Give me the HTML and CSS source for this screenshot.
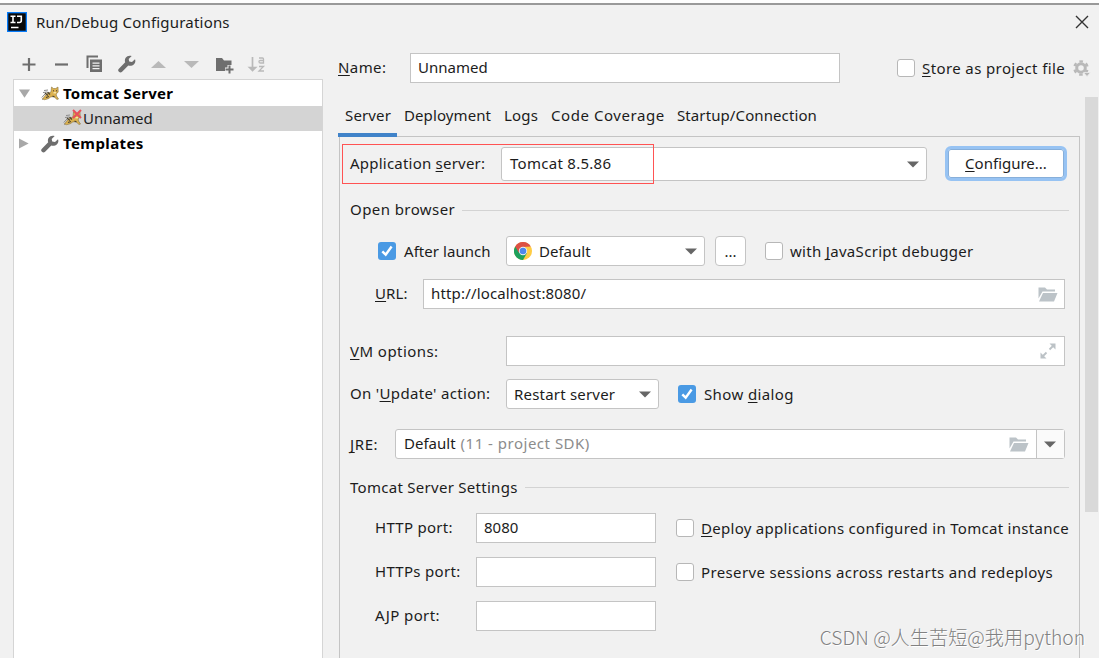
FILE: index.html
```html
<!DOCTYPE html>
<html lang="en">
<head>
<meta charset="utf-8">
<title>Run/Debug Configurations</title>
<link rel="stylesheet" href="styles.css">
</head>
<body>
<svg class="defs" width="0" height="0">
  <symbol id="caret" viewBox="0 0 12 7"><path d="M0 0.5h12L6 6.5z"/></symbol>
  <symbol id="wrench" viewBox="0 0 18 18"><path d="M17 4.200 14 7.100 11.200 6.600 10.700 4 13.700 1C11.400.2 9 .8 7.700 2.700 6.800 4.100 6.600 5.800 7.200 7.300L.9 13.700a2.100 2.100 0 0 0 3.200 3.100L10.300 10.500c2 .6 4.200.1 5.700-1.300 1.300-1.300 1.700-3.300 1-5z"/></symbol>
  <symbol id="folder" viewBox="0 0 20 15"><path d="M.5.500h6.500l2 2h8v2H4.500L.5 11.500z"/><path d="M5 6h14.500l-3.500 8.500H1z"/></symbol>
  <symbol id="check" viewBox="0 0 18 18"><path d="M4.300 9.300 7.700 12.700 13.600 4.500" fill="none" stroke="#fff" stroke-width="2.400"/></symbol>
  <symbol id="cat" viewBox="0 0 18 16">
    <path d="M3 4.500 7 4M2 6.500 6 6M.8 11.500 4 8M1 13.500l3-2" fill="none" stroke="#8a8a8a" stroke-width="1"/>
    <path d="M3.500 10.500 6 7.500l4-1.500L10.500 1l2 1.500h2.200l2.300-1.500.2 5-2 2 .3 2 2 3-1.500.5-3-2.800-3.200.2-2.500 1.800-3.800 1-2-.7z" fill="#dcb24f" stroke="#8a7441" stroke-width=".6"/>
    <path d="m4 7 3 2.500M6.500 6l2.500 2.500M5 11.500l3-1M11.500 10l2 1" stroke="#4a4331" stroke-width="1.200"/>
    <path d="M12 4.800h1M15 4.800h1" stroke="#433" stroke-width="1"/><path d="M12.500 6.800h2.500" stroke="#fff5ce"/>
  </symbol>
</svg>
<div class="window">
  <header class="titlebar">
    <svg class="logo" viewBox="0 0 20 20"><rect width="20" height="20" fill="#087cfa"/><rect x="1.300" y="1.300" width="17.400" height="17.400" fill="#090909"/><path d="M3.500 4.300h5M6 4.300v6.200M3.500 10.500h5M10 4.300h4.300v4.200q0 2-2 2h-2.300" fill="none" stroke="#fff" stroke-width="1.600"/><path d="M4 15.500h7.500" stroke="#fff" stroke-width="1.500"/></svg>
    <span class="t title">Run/Debug Configurations</span>
    <svg class="close" viewBox="0 0 14 14"><path d="m1 1 12 12M13 1 1 13" stroke="#333" stroke-width="1.400"/></svg>
  </header>
  <main class="body">
    <aside class="side">
      <div class="toolbar">
        <svg viewBox="0 0 20 20"><path d="M10 4v13M3.500 10.500h13" stroke="#6e6e6e" stroke-width="2.200"/></svg>
        <svg viewBox="0 0 20 20"><path d="M3 10.500h13" stroke="#6e6e6e" stroke-width="2.200"/></svg>
        <svg viewBox="0 0 20 20"><path d="M3.500 14V2.500H14" fill="none" stroke="#6e6e6e" stroke-width="2"/><path d="M6 5.500h12V18H6zM8.500 8.500v1.200h7V8.500zM8.500 11.200v1.200h7v-1.200zM8.500 14v1.200h7V14z" fill="#6e6e6e" fill-rule="evenodd"/></svg>
        <svg viewBox="0 0 18 18" fill="#6e6e6e"><use href="#wrench"/></svg>
        <svg viewBox="0 0 20 20"><path d="M2 14h15L9.500 7z" fill="#b9b9b9"/></svg>
        <svg viewBox="0 0 20 20"><path d="M2 7h15L9.500 14z" fill="#b9b9b9"/></svg>
        <svg viewBox="0 0 20 20"><path d="M2 4h6l2 2.500h7.500V11h-4v2.500H11V17H2z" fill="#6e6e6e"/><path d="M15.500 11.500v8M11.500 15.500h8" stroke="#6e6e6e" stroke-width="2"/></svg>
        <svg viewBox="0 0 20 20"><path d="M5.500 3v13M2.500 13.500l3 3 3-3z" fill="#b9b9b9" stroke="#b9b9b9" stroke-width="1.700"/><path d="M12 4h3.500q1 0 1 1v4h-3q-1.500 0-1.500-1.300t1.500-1.200h3M12 12.500h4.500l-4.500 4.500h5" fill="none" stroke="#b9b9b9" stroke-width="1.300"/></svg>
      </div>
      <div class="tree">
        <div class="node"><svg class="arrow" viewBox="0 0 12 12"><path d="M0 1.500h12L6 10.500z"/></svg><svg class="cat"><use href="#cat"/></svg><b class="t up w-tomcat">Tomcat Server</b></div>
        <div class="node child selected"><span class="badged"><svg class="cat"><use href="#cat"/></svg><svg class="cross" viewBox="0 0 10 10"><path d="m1 1 8 8M9 1 1 9" stroke="#e8505b" stroke-width="2"/></svg></span><span class="t up">Unnamed</span></div>
        <div class="node"><svg class="arrow" viewBox="0 0 12 12"><path d="M0 0.500v11L10.500 6z"/></svg><svg class="tool"><use href="#wrench"/></svg><b class="t up w-templates">Templates</b></div>
      </div>
    </aside>
    <section class="config">
      <div class="name-row">
        <label class="t up name-label"><u>N</u>ame:</label>
        <div class="field name-field"><span class="t up">Unnamed</span></div>
        <i class="checkbox"></i><span class="t store"><u>S</u>tore as project file</span>
        <svg class="gear" viewBox="0 0 18 18"><circle cx="8" cy="9" r="4.300" fill="none" stroke="#b9b9b9" stroke-width="3"/><circle cx="8" cy="9" r="6.600" fill="none" stroke="#b9b9b9" stroke-width="2.400" stroke-dasharray="3.450 3.450" stroke-dashoffset="1.700" transform="rotate(30 8 9)"/><path d="M10.500 13.500h7L14 17.500z" fill="#b9b9b9" stroke="#f1f1f1" stroke-width=".7"/></svg>
      </div>
      <nav class="tabs">
        <span class="tab active"><span class="t w-server">Server</span></span>
        <span class="tab tab-deploy"><span class="t">Deployment</span></span>
        <span class="tab tab-logs"><span class="t">Logs</span></span>
        <span class="tab tab-cover"><span class="t">Code Coverage</span></span>
        <span class="tab tab-start"><span class="t">Startup/Connection</span></span>
      </nav>
      <div class="pane">
        <div class="row app-row">
          <label class="t up app-label">Application <u>s</u>erver:</label>
          <div class="field combo app-combo"><span class="t up w-version">Tomcat 8.5.86</span><svg class="caret"><use href="#caret"/></svg></div>
          <div class="configure"><span class="t"><u>C</u>onfigure...</span></div>
          <div class="highlight"></div>
        </div>
        <div class="group browser-group"><span class="t up w-open">Open browser</span><hr></div>
        <div class="row launch-row">
          <i class="checkbox on"><svg><use href="#check"/></svg></i><span class="t launch-label">After launch</span>
          <div class="field combo browser-combo">
            <svg class="chrome" viewBox="0 0 18 18"><circle cx="9" cy="9" r="9" fill="#fc4"/><path d="M9 9 1.200 4.500A9 9 0 0 0 9 18l3.900-6.800z" fill="#1da05d"/><path d="M1.200 4.500A9 9 0 0 1 16.800 4.500L9 5v4l-3.900 2z" fill="#dd5145"/><circle cx="9" cy="9" r="4.200" fill="#f1f1f1"/><circle cx="9" cy="9" r="3.300" fill="#4d87ed"/></svg>
            <span class="t">Default</span><svg class="caret"><use href="#caret"/></svg></div>
          <div class="more"><span class="t">...</span></div>
          <i class="checkbox"></i><span class="t debug-label">with <u>J</u>avaScript debugger</span>
        </div>
        <div class="row url-row"><label class="t up url-label"><u>U</u>RL:</label><div class="field wide"><span class="t up w-url">http://localhost:8080/</span><svg class="folder"><use href="#folder"/></svg></div></div>
        <div class="row vm-row"><label class="t vm-label"><u>V</u>M options:</label><div class="field wide"><svg class="expand" viewBox="0 0 16 16"><path d="M9.500.500h6v6zM.5 9.500v6h6z" fill="#bcc2c6"/><path d="m13.500 2.500-4 4M2.500 13.500l4-4" stroke="#bcc2c6" stroke-width="1.800"/></svg></div></div>
        <div class="row update-row"><label class="t up update-label">On '<u>U</u>pdate' action:</label><div class="field combo update-combo"><span class="t w-restart">Restart server</span><svg class="caret"><use href="#caret"/></svg></div><i class="checkbox on"><svg><use href="#check"/></svg></i><span class="t show-label">Show <u>d</u>ialog</span></div>
        <div class="row jre-row"><label class="t jre-label"><u>J</u>RE:</label><div class="field combo jre-combo"><span class="t up">Default</span><span class="t up sdk">(11 - project SDK)</span><svg class="folder"><use href="#folder"/></svg><span class="drop"><svg class="caret"><use href="#caret"/></svg></span></div></div>
        <div class="group settings-group"><span class="t w-settings">Tomcat Server Settings</span><hr></div>
        <div class="row port-row"><label class="t up w-http">HTTP port:</label><div class="field"><span class="t up">8080</span></div><i class="checkbox"></i><span class="t deploy-label"><u>D</u>eploy applications configured in Tomcat instance</span></div>
        <div class="row port-row"><label class="t up w-https">HTTPs port:</label><div class="field"></div><i class="checkbox"></i><span class="t preserve-label">Preserve sessions across restarts and redeploys</span></div>
        <div class="row port-row"><label class="t up w-ajp">AJP port:</label><div class="field"></div></div>
      </div>
    </section>
    <div class="scrollbar"></div>
  </main>
  <div class="watermark">CSDN @人生苦短@我用python</div>
</div>
</body>
</html>
```
FILE: styles.css
```css
* { box-sizing: border-box; }
body { margin: 0; background: #f1f1f1; color: #1c1c1c; font: 15px/20px "Noto Sans", "Open Sans", sans-serif; }
svg { display: block; flex: none; }
u { text-decoration-thickness: 1px; text-underline-offset: 2px; text-decoration-skip-ink: none; }
.defs { position: absolute; }
.t { white-space: nowrap; flex: none; }
.up { padding-bottom: 2px; }
.window { position: relative; width: 1099px; height: 658px; overflow: hidden; border-top: 3px solid #fdfdfd; }
.titlebar { height: 39px; border-top: 2px solid #999; display: flex; align-items: center; padding: 0 10px 4px 7px; }
.logo { width: 20px; height: 20px; margin-right: 9px; }
.title { letter-spacing: .2px; }
.close { width: 14px; height: 14px; margin-left: auto; }
.body { height: 616px; display: flex; }
.side { width: 310px; margin-left: 13px; display: flex; flex-direction: column; flex: none; }
.toolbar { height: 37px; padding: 12px 0 0 6px; display: flex; gap: 12.5px; }
.toolbar svg { width: 20px; height: 20px; }
.toolbar svg:nth-child(4) { width: 18px; height: 18px; margin: 1px; }
.tree { flex: 1; background: #fff; border: 1px solid #d5d5d5; border-bottom: 0; padding-top: 1px; }
.node { height: 25px; display: flex; align-items: center; padding-left: 5px; }
.arrow { width: 11px; height: 11px; margin-right: 11px; fill: #a8a8a8; }
.cat { width: 18px; height: 16px; }
.tool { width: 18px; height: 18px; fill: #6e6e6e; }
.node b { margin-left: 4px; color: #000; }
.w-tomcat { letter-spacing: .25px; }
.w-templates { letter-spacing: .4px; }
.child { padding-left: 49px; }
.selected { background: #d4d4d4; }
.badged { position: relative; margin-right: 2px; }
.cross { position: absolute; right: -1px; top: -2px; width: 10px; height: 10px; }
.config { width: 753px; margin-left: 15px; display: flex; flex-direction: column; flex: none; }
.name-row { height: 30px; margin-top: 11px; display: flex; align-items: center; }
.name-label { width: 72px; letter-spacing: .4px; }
.field { height: 30px; background: #fff; border: 1px solid #c4c4c4; display: flex; align-items: center; padding: 0 7px; flex: none; }
.name-field { width: 430px; margin-right: 57px; }
.checkbox { width: 18px; height: 18px; border: 1px solid #b7b7b7; border-radius: 3px; background: #fff; margin-right: 7px; flex: none; }
.checkbox.on { background: #4a9ae4; border: 0; }
.checkbox svg { width: 18px; height: 18px; }
.store { letter-spacing: .39px; }
.gear { width: 18px; height: 18px; margin-left: auto; }
.tabs { height: 53px; display: flex; padding-top: 12px; }
.tab { height: 42px; padding-top: 10px; flex: none; }
.active { width: 59px; padding-left: 7px; border-bottom: 4px solid #4083c9; position: relative; z-index: 1; letter-spacing: .15px; }
.tab-deploy { width: 100px; padding-left: 7px; letter-spacing: .1px; }
.tab-logs { width: 47px; padding-left: 7px; letter-spacing: .2px; }
.tab-cover { width: 127px; padding-left: 7px; letter-spacing: .56px; }
.tab-start { padding-left: 6px; letter-spacing: .1px; }
.pane { width: 741px; height: 523px; border: 1px solid #c4c4c4; border-bottom: 0; margin-left: 1px; padding: 10px 0 0 10px; flex: none; }
.row { display: flex; align-items: center; height: 30px; }
.combo { border-radius: 3px; }
.caret { width: 12px; height: 7px; fill: #666; margin-left: auto; }
.app-row { height: 34px; position: relative; }
.app-label { width: 151px; letter-spacing: .22px; }
.app-combo { width: 426px; height: 34px; margin-right: 18px; padding-left: 8px; }
.w-version { letter-spacing: .28px; }
.configure { width: 122px; height: 35px; margin-top: -2px; background: #fff; border: 3px solid #97c3f3; border-radius: 6px; display: flex; align-items: center; justify-content: center; box-shadow: inset 0 0 0 1px #87afda; }
.highlight { position: absolute; left: -8px; top: -3px; width: 312px; height: 40px; border: 1px solid #ff5353; }
.group { display: flex; align-items: center; height: 20px; }
.group hr { flex: 1; margin: 0 10px 0 7px; border: 0; border-top: 1px solid #d3d3d3; }
.browser-group { margin-top: 19px; }
.w-open { letter-spacing: .42px; }
.launch-row { margin-top: 16px; padding-left: 28px; }
.launch-row .checkbox.on { margin-right: 8px; }
.launch-label { width: 102px; letter-spacing: .05px; }
.browser-combo { width: 199px; margin-right: 10px; }
.chrome { width: 18px; height: 18px; margin-right: 7px; }
.more { width: 31px; height: 30px; background: #fff; border: 1px solid #c4c4c4; border-radius: 4px; display: flex; justify-content: center; align-items: center; margin-right: 19px; }
.debug-label { letter-spacing: .31px; }
.url-row { margin-top: 13px; padding-left: 25px; }
.url-label { width: 48px; letter-spacing: .1px; }
.w-url { letter-spacing: .16px; }
.wide { flex: 1; margin-right: 14px; padding-right: 6px; }
.folder { width: 20px; height: 15px; fill: #bcc3c8; margin-left: auto; }
.vm-row { margin-top: 27px; }
.vm-label, .update-label { width: 156px; }
.vm-label { letter-spacing: .45px; }
.update-label { letter-spacing: .32px; }
.expand { width: 16px; height: 16px; margin: 0 2px 0 auto; }
.update-row { margin-top: 13px; }
.update-combo { width: 153px; margin-right: 19px; }
.update-row .checkbox { margin-right: 8px; }
.w-restart { letter-spacing: .2px; }
.show-label { letter-spacing: .38px; }
.jre-row { margin-top: 20px; }
.jre-label { width: 45px; letter-spacing: .6px; }
.jre-combo { width: 670px; padding: 0 0 0 8px; }
.sdk { color: #8c8c8c; margin-left: 5px; letter-spacing: .5px; }
.drop { width: 28px; height: 28px; margin-left: 7px; border-left: 1px solid #c4c4c4; display: flex; align-items: center; padding-right: 8px; background: #fafafa; }
.settings-group { margin-top: 18px; }
.w-settings { letter-spacing: .28px; }
.port-row { margin: 16px 0 -2px; padding-left: 25px; }
.port-row label { width: 101px; }
.port-row .field { width: 180px; margin-right: 20px; }
.w-http { letter-spacing: .27px; }
.w-https { letter-spacing: .3px; }
.w-ajp { letter-spacing: .4px; }
.deploy-label { letter-spacing: .29px; }
.preserve-label { letter-spacing: .36px; }
.scrollbar { width: 13px; height: 415px; background: #d9d9d9; margin: 55px 0 0 -6px; }
.watermark { position: absolute; right: 14px; top: 620px; font: 19.2px/28px "Noto Sans CJK SC", sans-serif; font-weight: 300; color: #818181; text-shadow: 1px 1px 0 #fff; white-space: nowrap; }
```
